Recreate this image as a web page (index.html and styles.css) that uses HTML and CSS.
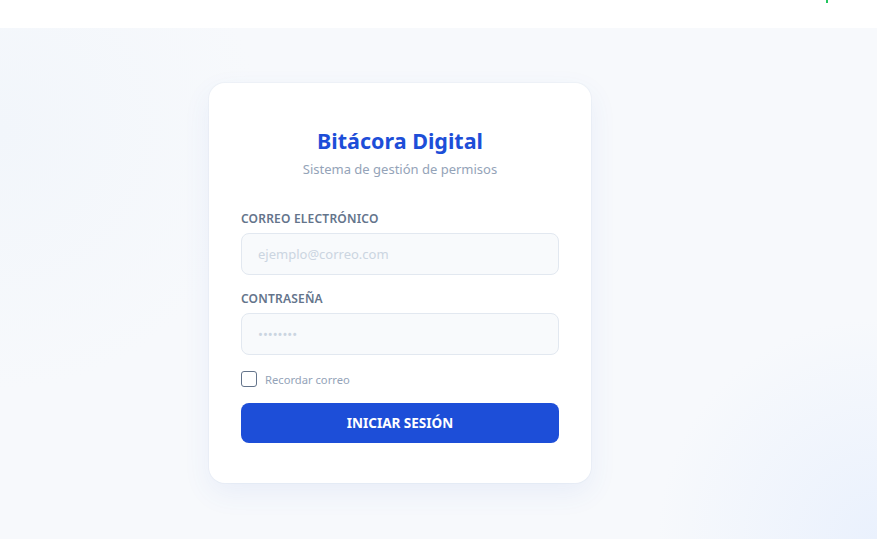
FILE: index.html
```html
<!DOCTYPE html>
<html lang="es">
  <head>
    <meta charset="UTF-8" />
    <meta name="viewport" content="width=device-width, initial-scale=1.0" />
    <title>Bitácora Digital - Iniciar sesión</title>
    <link rel="stylesheet" href="styles.css">
  </head>
  <body>
    <!-- Top bar -->
    <header class="topbar">
      <span class="status-dot"></span>
    </header>

    <main class="login-page">
      <div class="login-card">
        <h1 class="brand">Bitácora Digital</h1>
        <p class="subtitle">Sistema de gestión de permisos</p>

        <form id="loginForm" class="login-form">
          <label for="email">Correo electrónico</label>
          <input type="email" id="email" name="email" placeholder="ejemplo@correo.com" />

          <label for="password">Contraseña</label>
          <input type="password" id="password" name="password" placeholder="••••••••" />

          <div class="remember">
            <input type="checkbox" id="remember" name="remember" />
            <label for="remember">Recordar correo</label>
          </div>

          <button type="submit">Iniciar sesión</button>
        </form>
      </div>
    </main>
  </body>
</html>
```

FILE: styles.css
```css
/* Reset & Base Styles */
* {
  margin: 0;
  padding: 0;
  box-sizing: border-box;
}

body {
  font-family: "Noto Sans", "Open Sans", sans-serif;
  background-color: #f8fafc;
  color: #334155;
}

/* Top bar */
.topbar {
  height: 28px;
  background-color: #fff;
  position: relative;
}

.status-dot {
  position: absolute;
  top: 0;
  left: 826px;
  width: 2px;
  height: 3px;
  background-color: #22c55e;
}

/* Page */
.login-page {
  min-height: calc(100vh - 28px);
  display: flex;
  align-items: center;
  padding-left: 209px;
  padding-bottom: 1px;
  background:
    radial-gradient(circle at 100% 100%, #eaf1fd 0, rgba(234, 241, 253, 0) 220px),
    radial-gradient(circle at 0% 20%, #f2f6fb 0, rgba(242, 246, 251, 0) 260px),
    #f7f9fc;
}

/* Card */
.login-card {
  width: 382px;
  background-color: #fff;
  border-radius: 16px;
  padding: 40px 32px;
  box-shadow: 0 10px 28px rgba(59, 100, 200, 0.08), 0 0 0 1px rgba(226, 232, 240, 0.3);
}

.brand {
  text-align: center;
  font-size: 21.5px;
  font-weight: 700;
  color: #1d4ed8;
  line-height: 30px;
  margin-top: 3px;
}

.subtitle {
  text-align: center;
  font-size: 13px;
  line-height: 20px;
  color: #94a3b8;
  margin-top: 3px;
}

/* Form */
.login-form {
  display: flex;
  flex-direction: column;
  margin-top: 32px;
}

.login-form > label {
  font-size: 12px;
  line-height: 16px;
  font-weight: 600;
  letter-spacing: 0.2px;
  text-transform: uppercase;
  color: #64748b;
  margin-bottom: 6px;
}

.login-form input[type="email"],
.login-form input[type="password"] {
  height: 42px;
  padding: 0 16px;
  border: 1px solid #e2e8f0;
  border-radius: 8px;
  background-color: #f8fafc;
  font-family: inherit;
  font-size: 13px;
  color: #334155;
  margin-bottom: 16px;
}

.login-form input::placeholder {
  color: #cbd5e1;
}

.remember {
  display: flex;
  align-items: center;
  gap: 8px;
  height: 16px;
  margin-bottom: 16px;
}

.remember input {
  appearance: none;
  width: 16px;
  height: 16px;
  border: 1px solid #64748b;
  border-radius: 3px;
  background-color: #fff;
}

.remember label {
  font-size: 11.2px;
  color: #94a3b8;
}

button {
  height: 40px;
  background-color: #1d4ed8;
  color: #fff;
  border: none;
  border-radius: 8px;
  font-family: inherit;
  font-size: 13.5px;
  font-weight: 700;
  text-transform: uppercase;
  cursor: pointer;
}
```
